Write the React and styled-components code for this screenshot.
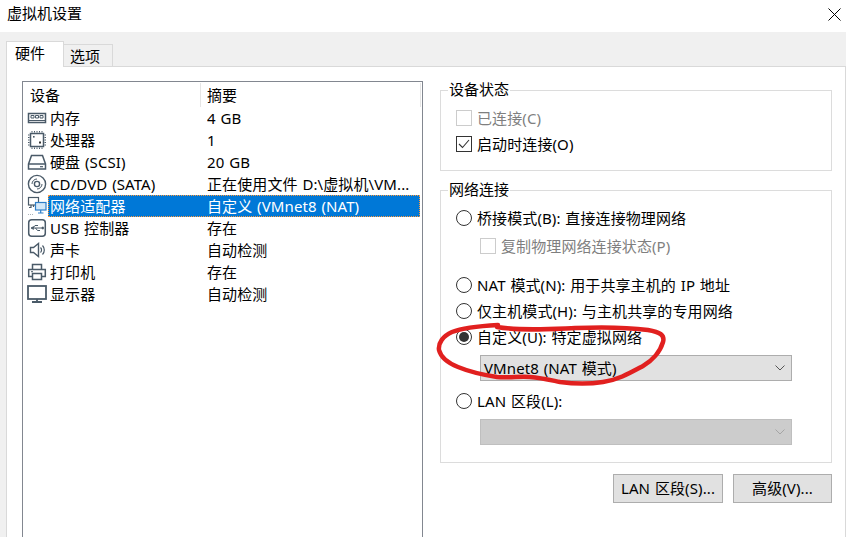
import React from 'react';
import styled, { createGlobalStyle } from 'styled-components';

const GlobalStyle = createGlobalStyle`
    html, body {
        margin: 0;
        padding: 0;
        background: #fff;
    }
    * {
        box-sizing: border-box;
    }
`;

const Window = styled.div`
    position: relative;
    width: 846px;
    height: 537px;
    overflow: hidden;
    display: flex;
    flex-direction: column;
    background: #fff;
    color: #000;
    font-family: "Noto Sans", "Noto Sans CJK SC", sans-serif;
    font-size: 15px;
    letter-spacing: 0.1px;
    word-spacing: 0.8px;
`;

const TitleBar = styled.div`
    height: 32px;
    flex: none;
    display: flex;
    align-items: center;
    justify-content: space-between;
    padding: 0 5px 7px 7px;
    letter-spacing: 0;
`;

const CloseIcon = styled.svg`
    width: 13px;
    height: 13px;
    margin-top: 4px;
`;

const Body = styled.div`
    flex: 1;
    min-height: 0;
    display: flex;
    flex-direction: column;
    background: #f0f0f0;
    padding: 9px 0 0 6px;
`;

const TabRow = styled.div`
    height: 25px;
    flex: none;
    display: flex;
    align-items: flex-end;
    position: relative;
    z-index: 1;
    letter-spacing: 0;
`;

const Tab = styled.div`
    display: flex;
    align-items: center;
    border: 1px solid #d9d9d9;
    width: ${(p) => (p.$active ? '58px' : '50px')};
    height: ${(p) => (p.$active ? '26px' : '23px')};
    margin-bottom: -1px;
    margin-left: ${(p) => (p.$active ? '0' : '-1px')};
    background: ${(p) => (p.$active ? '#fff' : '#f0f0f0')};
    border-bottom: ${(p) => (p.$active ? 'none' : '1px solid #d9d9d9')};
    padding: ${(p) => (p.$active ? '0 0 4px 8px' : '0 0 0 6px')};
    z-index: ${(p) => (p.$active ? 2 : 1)};
`;

const Panel = styled.div`
    flex: 1;
    min-height: 0;
    display: flex;
    gap: 17px;
    background: #fff;
    border: 1px solid #d9d9d9;
    border-bottom: none;
    padding: 13px 13px 0 15px;
`;

const DeviceList = styled.div`
    width: 401px;
    flex: none;
    margin-top: 1px;
    border: 1px solid #828790;
    border-bottom: none;
    padding: 1px 1px 0 0;
`;

const HeaderRow = styled.div`
    height: 24px;
    display: flex;
    align-items: center;
`;

const HeaderCell = styled.div`
    height: 100%;
    display: flex;
    align-items: center;
    padding: 0 0 2px ${(p) => p.$pad};
    width: ${(p) => p.$w};
    flex: ${(p) => (p.$w ? 'none' : '1')};
    border-right: 1px solid #e5e5e5;
`;

const Row = styled.div`
    height: 22px;
    display: flex;
    align-items: stretch;
`;

const IconSlot = styled.div`
    width: 25px;
    flex: none;
    padding: 1px 0 0 5px;
`;

const Icon = styled.svg`
    width: 20px;
    height: 20px;
    display: block;
    margin-left: -1px;
`;

const RowBody = styled.div`
    flex: 1;
    display: flex;
    align-items: center;
    padding: 0 0 1px 2px;
    margin-right: 1px;
    background: ${(p) => (p.$selected ? '#0078d7' : 'transparent')};
    color: ${(p) => (p.$selected ? '#fff' : '#000')};
    outline: ${(p) => (p.$selected ? '1px dotted #ff9a3c' : 'none')};
    outline-offset: -1px;
`;

const NameCell = styled.div`
    width: 157px;
    flex: none;
    white-space: nowrap;
`;

const ValueCell = styled.div`
    flex: 1;
    white-space: nowrap;
    overflow: hidden;
`;

const SideColumn = styled.div`
    width: 392px;
    flex: none;
    display: flex;
    flex-direction: column;
`;

const Group = styled.fieldset`
    margin: 0 0 ${(p) => p.$after || '0'};
    border: 1px solid #dcdcdc;
    padding: ${(p) => p.$pad};
    min-width: 0;
`;

const GroupTitle = styled.legend`
    margin-left: -8px;
    padding: 0 1px 1px;
    height: 20px;
    line-height: 19px;
    letter-spacing: 0;
`;

const OptionRow = styled.label`
    height: 22px;
    display: flex;
    align-items: center;
    gap: 5px;
    margin-top: ${(p) => p.$top || '0'};
    margin-left: ${(p) => (p.$indent ? '24px' : '0')};
    color: ${(p) => (p.$disabled ? '#7f7f7f' : '#000')};
    white-space: nowrap;
`;

const OptionText = styled.span`
    margin-top: -1px;
`;

const CheckBox = styled.span`
    width: 16px;
    height: 16px;
    flex: none;
    display: flex;
    align-items: center;
    justify-content: center;
    background: #fff;
    border: 1px solid ${(p) => (p.$disabled ? '#cccccc' : '#333333')};
`;

const Radio = styled.span`
    width: 16px;
    height: 16px;
    flex: none;
    position: relative;
    border-radius: 50%;
    border: 1px solid #333;
    background: #fff;

    &::after {
        content: "";
        display: ${(p) => (p.$on ? 'block' : 'none')};
        position: absolute;
        top: 2px;
        left: 2px;
        width: 10px;
        height: 10px;
        border-radius: 50%;
        background: #333;
    }
`;

const Select = styled.div`
    width: 312px;
    height: 26px;
    margin-top: ${(p) => p.$top || '0'};
    margin-left: 24px;
    padding: 0 6px 2px 3px;
    display: flex;
    align-items: center;
    justify-content: space-between;
    background: ${(p) => (p.$disabled ? '#cccccc' : '#e1e1e1')};
    border: 1px solid ${(p) => (p.$disabled ? '#bfbfbf' : '#adadad')};
`;

const Chevron = styled.svg`
    width: 10px;
    height: 6px;
    flex: none;
    margin-top: 2px;
`;

const ButtonRow = styled.div`
    display: flex;
    justify-content: flex-end;
    gap: 10px;
    margin-top: 11px;
`;

const Button = styled.button`
    width: ${(p) => p.$w};
    height: 29px;
    padding: 0 0 2px;
    background: #e1e1e1;
    border: 1px solid #adadad;
    color: #000;
    font: inherit;
    letter-spacing: inherit;
    word-spacing: inherit;
`;

const Scribble = styled.svg`
    position: absolute;
    left: 0;
    top: 0;
    width: 846px;
    height: 537px;
    pointer-events: none;
    z-index: 5;
`;

const STROKE = '#4a5a68';

const devices = [
    {
        name: '内存',
        value: '4 GB',
        icon: (
            <g fill="none" stroke={STROKE}>
                <rect x="1.5" y="5.5" width="17" height="9" strokeWidth="1.5" />
                <path d="M4 7.5h3v2.5H4zM8.5 7.5h3v2.5h-3zM13 7.5h3v2.5h-3z" strokeWidth="1" />
                <path d="M2 12.5h16" strokeWidth="1" />
            </g>
        ),
    },
    {
        name: '处理器',
        value: '1',
        icon: (
            <g fill="none" stroke={STROKE}>
                <rect x="3.5" y="3.5" width="13" height="13" strokeWidth="1.5" />
                <path d="M5 1v1.5M7.5 1v1.5M10 1v1.5M12.5 1v1.5M15 1v1.5M5 17.5V19M7.5 17.5V19M10 17.5V19M12.5 17.5V19M15 17.5V19M1 5h1.5M1 7.5h1.5M1 10h1.5M1 12.5h1.5M1 15h1.5M17.5 5H19M17.5 7.5H19M17.5 10H19M17.5 12.5H19M17.5 15H19" strokeWidth="1" />
                <rect x="6" y="6" width="1.6" height="1.6" fill={STROKE} stroke="none" />
                <rect x="12" y="11.5" width="2" height="2" fill="#333" stroke="none" />
            </g>
        ),
    },
    {
        name: '硬盘 (SCSI)',
        value: '20 GB',
        icon: (
            <g fill="none" stroke={STROKE} strokeWidth="1.5">
                <path d="M1.5 12 4.5 3.5h11l3 8.5v5h-17z" />
                <path d="M1.5 12h17" />
                <path d="M13 14.7h3" strokeWidth="1.2" />
            </g>
        ),
    },
    {
        name: 'CD/DVD (SATA)',
        value: '正在使用文件 D:\\虚拟机\\VM...',
        icon: (
            <g fill="none" stroke={STROKE}>
                <circle cx="10" cy="10" r="8.6" strokeWidth="1.4" />
                <circle cx="10" cy="10" r="2.6" strokeWidth="1.4" />
                <path d="M5 10a5 5 0 0 1 5-5M15 10a5 5 0 0 1-5 5" strokeWidth="1" />
            </g>
        ),
    },
    {
        name: '网络适配器',
        value: '自定义 (VMnet8 (NAT)',
        selected: true,
        icon: (
            <g fill="none" strokeWidth="1.2">
                <rect x="1.5" y="1.5" width="10" height="7.5" stroke={STROKE} fill="#fff" />
                <path d="M4 9v2.5H2M6.5 9v2" stroke={STROKE} />
                <rect x="8.5" y="6.5" width="10.5" height="7.5" stroke="#2f7fc8" fill="#d4e8f8" />
                <path d="M13.7 14v2.5M11 17h5.5" stroke="#2f7fc8" />
                <path d="M1 18.5h6" stroke="#aab2ba" strokeDasharray="1 1" />
            </g>
        ),
    },
    {
        name: 'USB 控制器',
        value: '存在',
        icon: (
            <g fill="none" stroke={STROKE}>
                <rect x="1.7" y="1.7" width="16.6" height="16.6" rx="3" strokeWidth="1.5" />
                <path d="M4 10h11M6 10l2-2.5h3M8.5 10l2 2.5h2.5" strokeWidth="1" />
                <path d="M4 10l2.5-1.5v3zM15 9v2h1.5V9z" fill={STROKE} strokeWidth="0.6" />
            </g>
        ),
    },
    {
        name: '声卡',
        value: '自动检测',
        icon: (
            <g fill="none" stroke={STROKE}>
                <path d="M3.5 7.5h3l5-4v13l-5-4h-3z" strokeWidth="1.4" />
                <path d="M13.5 7.5a3.5 3.5 0 0 1 0 5M15.5 5.5a6.5 6.5 0 0 1 0 9" strokeWidth="1.2" />
            </g>
        ),
    },
    {
        name: '打印机',
        value: '存在',
        icon: (
            <g fill="none" stroke={STROKE} strokeWidth="1.5">
                <path d="M5.5 7V2.5h9V7" />
                <path d="M5 14.5H1.7V7.5h16.6v7H15" />
                <path d="M5.5 11.5h9v6h-9z" />
                <path d="M4 9.7h2" strokeWidth="1" />
            </g>
        ),
    },
    {
        name: '显示器',
        value: '自动检测',
        icon: (
            <g fill="none" stroke={STROKE}>
                <rect x="1" y="2" width="18" height="13" strokeWidth="1.8" />
                <path d="M10 15v2.5M5 18h10" strokeWidth="1.8" />
            </g>
        ),
    },
];

const ChevronDown = ({ color }) => (
    <Chevron viewBox="0 0 10 6">
        <path d="M.5.5 5 5 9.5.5" fill="none" stroke={color} strokeWidth="1" />
    </Chevron>
);

const App = () => (
    <>
        <GlobalStyle />
        <Window>
            <TitleBar>
                <span>虚拟机设置</span>
                <CloseIcon viewBox="0 0 13 13">
                    <path d="M.5.5l12 12M12.5.5l-12 12" stroke="#000" strokeWidth="1" fill="none" />
                </CloseIcon>
            </TitleBar>
            <Body>
                <TabRow>
                    <Tab $active>硬件</Tab>
                    <Tab>选项</Tab>
                </TabRow>
                <Panel>
                    <DeviceList>
                        <HeaderRow>
                            <HeaderCell $w="178px" $pad="7px">设备</HeaderCell>
                            <HeaderCell $pad="6px">摘要</HeaderCell>
                        </HeaderRow>
                        {devices.map((d) => (
                            <Row key={d.name}>
                                <IconSlot>
                                    <Icon viewBox="0 0 20 20">{d.icon}</Icon>
                                </IconSlot>
                                <RowBody $selected={d.selected}>
                                    <NameCell>{d.name}</NameCell>
                                    <ValueCell>{d.value}</ValueCell>
                                </RowBody>
                            </Row>
                        ))}
                    </DeviceList>
                    <SideColumn>
                        <Group $pad="6.5px 15px 15.5px" $after="9px">
                            <GroupTitle>设备状态</GroupTitle>
                            <OptionRow $disabled>
                                <CheckBox $disabled />
                                <OptionText>已连接(C)</OptionText>
                            </OptionRow>
                            <OptionRow $top="4px">
                                <CheckBox>
                                    <svg width="12" height="10" viewBox="0 0 12 10">
                                        <path d="M1 5l3.5 3.5L11 1" fill="none" stroke="#333" strokeWidth="1.1" />
                                    </svg>
                                </CheckBox>
                                <OptionText>启动时连接(O)</OptionText>
                            </OptionRow>
                        </Group>
                        <Group $pad="7px 15px 17px">
                            <GroupTitle>网络连接</GroupTitle>
                            <OptionRow>
                                <Radio />
                                <OptionText>桥接模式(B): 直接连接物理网络</OptionText>
                            </OptionRow>
                            <OptionRow $indent $disabled $top="6px">
                                <CheckBox $disabled />
                                <OptionText>复制物理网络连接状态(P)</OptionText>
                            </OptionRow>
                            <OptionRow $top="17px">
                                <Radio />
                                <OptionText>NAT 模式(N): 用于共享主机的 IP 地址</OptionText>
                            </OptionRow>
                            <OptionRow $top="4px">
                                <Radio />
                                <OptionText>仅主机模式(H): 与主机共享的专用网络</OptionText>
                            </OptionRow>
                            <OptionRow $top="4px">
                                <Radio $on />
                                <OptionText>自定义(U): 特定虚拟网络</OptionText>
                            </OptionRow>
                            <Select $top="7px">
                                <span>VMnet8 (NAT 模式)</span>
                                <ChevronDown color="#555" />
                            </Select>
                            <OptionRow $top="9px">
                                <Radio />
                                <OptionText>LAN 区段(L):</OptionText>
                            </OptionRow>
                            <Select $top="7px" $disabled>
                                <span />
                                <ChevronDown color="#a5a5a5" />
                            </Select>
                        </Group>
                        <ButtonRow>
                            <Button $w="110px">LAN 区段(S)...</Button>
                            <Button $w="99px">高级(V)...</Button>
                        </ButtonRow>
                    </SideColumn>
                </Panel>
            </Body>
            <Scribble viewBox="0 0 846 537">
                <path
                    d="M498 325C480 326 462 328 452 332C443 336 438 343 439 350C441 358 448 363 458 367C470 372 484 375 497 377C510 378 520 376 530 377C542 378 550 380 560 382C575 384 590 384 603 382C618 380 630 373 643 366C652 361 660 352 663 342C665 335 660 332 648 330C625 327 600 327 575 328C550 329 520 331 497 327"
                    fill="none"
                    stroke="#e1201f"
                    strokeWidth="4.5"
                    strokeLinecap="round"
                    strokeLinejoin="round"
                />
            </Scribble>
        </Window>
    </>
);

export default App;
